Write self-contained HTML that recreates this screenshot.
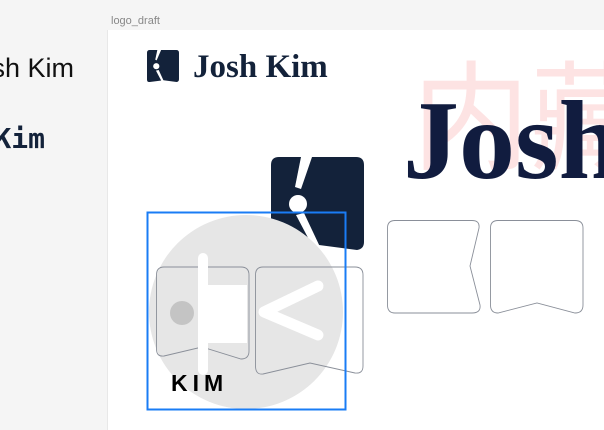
<!DOCTYPE html>
<html><head><style>
html,body{margin:0;padding:0;width:604px;height:430px;overflow:hidden;background:#f5f5f5}
</style></head><body>
<svg width="604" height="430" viewBox="0 0 604 430" xmlns="http://www.w3.org/2000/svg">
<rect x="0" y="0" width="604" height="430" fill="#f5f5f5"/>
<text x="111" y="24" font-family="Liberation Sans, sans-serif" font-size="11" fill="#888">logo_draft</text>
<text x="74" y="77" text-anchor="end" font-family="Liberation Sans, sans-serif" font-size="27" fill="#111">sh Kim</text>
<text x="45" y="148" text-anchor="end" font-family="DejaVu Sans Mono, monospace" font-weight="bold" font-size="28" fill="#13223a">Kim</text>
<rect x="108" y="30" width="500" height="410" fill="#fff"/>
<line x1="107.5" y1="30" x2="107.5" y2="430" stroke="#e8e8e8"/>
<g transform="translate(147,50) scale(0.344)">
<path d="M8 0H85Q93 0 93 8V85Q93 92 86 93L48 88L8 93Q0 94 0 86V8Q0 0 8 0Z" fill="#13223a"/>
<path d="M30 0H41L28 30L24 28Z" fill="#fff"/>
<circle cx="27" cy="47" r="9" fill="#fff"/>
<path d="M26 60L34 58L50 93L44 94Z" fill="#fff"/>
</g>
<text x="193" y="77" font-family="Liberation Serif, serif" font-weight="bold" font-size="33" fill="#13223a">Josh Kim</text>
<text x="412" y="160" font-family="Noto Sans CJK SC, sans-serif" font-size="118" fill="#fde3e3">内藏</text>
<text x="403" y="178" font-family="Liberation Serif, serif" font-weight="bold" font-size="112" fill="#111c3f">Josh</text>
<g transform="translate(271,157)">
<path d="M8 0H85Q93 0 93 8V85Q93 92 86 93L48 88L8 93Q0 94 0 86V8Q0 0 8 0Z" fill="#13223a"/>
<path d="M30 0H41L30 32L24 30Z" fill="#fff"/>
<circle cx="27" cy="47" r="9" fill="#fff"/>
<path d="M25 58L33 56L50 92L44 94Z" fill="#fff"/>
</g>
<path d="M394 220.5H472Q480 220.5 479 228L470 266L480 305Q481 313 472 313H395Q387.5 313 387.5 305V228Q387.5 220.5 395 220.5Z" fill="none" stroke="#8a8f99" stroke-width="0.9"/>
<path d="M498 220.5H575Q583 220.5 583 228V305Q583 313 575 313L537 303L498 313Q490.5 313 490.5 305V228Q490.5 220.5 498 220.5Z" fill="none" stroke="#8a8f99" stroke-width="0.9"/>
<circle cx="246" cy="312" r="97" fill="#e6e6e6"/>
<path d="M164 267H241Q249 267 249 275V351Q249 359 241 359L202 347L164 356Q156.5 357 156.5 349V275Q156.5 267 164 267Z" fill="none" stroke="#8a8f99" stroke-width="0.9"/>
<path d="M263 267H355Q363 267 363 275V366Q363 374 355 373L310 363L263 374Q255.5 375 255.5 366V275Q255.5 267 263 267Z" fill="none" stroke="#8a8f99" stroke-width="0.9"/>
<path d="M203 258V370" stroke="#fff" stroke-width="10" stroke-linecap="round"/>
<rect x="205" y="285" width="42" height="58" fill="#fff"/>
<path d="M318 286L264 312L318 335" fill="none" stroke="#fff" stroke-width="11" stroke-linecap="round" stroke-linejoin="round"/>
<circle cx="182" cy="313" r="12" fill="#c4c4c4"/>
<text x="171" y="391" font-family="Liberation Sans, sans-serif" font-weight="bold" font-size="23" letter-spacing="5" fill="#000">KIM</text>
<rect x="147.5" y="212.5" width="198" height="197" fill="none" stroke="#1a7cf5" stroke-width="2"/>
</svg>
</body></html>
